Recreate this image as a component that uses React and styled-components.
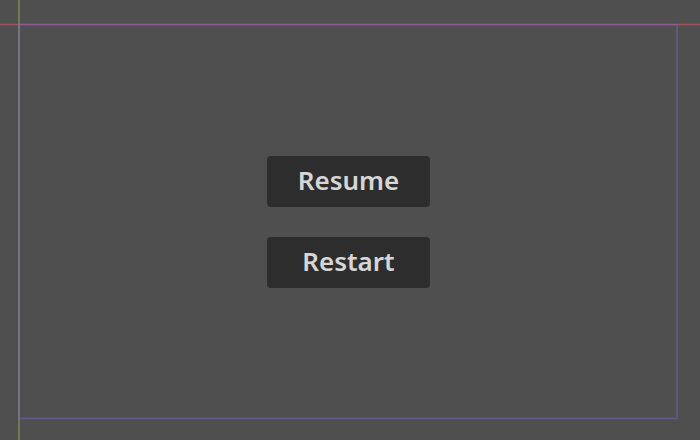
import React from 'react';
import styled, { createGlobalStyle } from 'styled-components';

const GlobalStyle = createGlobalStyle`
  html, body {
    margin: 0;
    padding: 0;
    background: #4f4f4f;
  }
  body {
    font-family: "Noto Sans", "Open Sans", sans-serif;
  }
`;

const Viewport = styled.div`
  position: relative;
  width: 700px;
  height: 440px;
  overflow: hidden;
  background: #4f4f4f;
  box-sizing: border-box;
  padding: 24px 0 0 19px;
`;

const Guides = styled.svg`
  position: absolute;
  left: 0;
  top: 0;
  pointer-events: none;
`;

const Frame = styled.div`
  width: 659px;
  height: 395px;
  display: flex;
  flex-direction: column;
  align-items: center;
  justify-content: center;
  gap: 30px;
`;

const MenuButton = styled.button`
  width: 163px;
  height: 51px;
  border: none;
  border-radius: 4px;
  background: #2d2d2d;
  color: #d6d6d6;
  font-family: "Noto Sans", "Open Sans", sans-serif;
  font-weight: 600;
  font-size: 26px;
  padding: 0 0 2px;
  cursor: pointer;
`;

const PauseMenu = () => (
  <Viewport>
    <Frame>
      <MenuButton>Resume</MenuButton>
      <MenuButton>Restart</MenuButton>
    </Frame>
    <Guides width="700" height="440">
      {/* x axis */}
      <line x1="0" y1="24.5" x2="700" y2="24.5" stroke="#b3525e" strokeOpacity="0.8" strokeWidth="1.5" />
      {/* y axis */}
      <line x1="19" y1="0" x2="19" y2="440" stroke="#93a35a" strokeOpacity="0.7" strokeWidth="1.5" />
      {/* viewport rect */}
      <rect x="19" y="24.5" width="658" height="394" fill="none" stroke="#7a68c8" strokeOpacity="0.5" strokeWidth="1.5" />
    </Guides>
  </Viewport>
);

export default function App() {
  return (
    <>
      <GlobalStyle />
      <PauseMenu />
    </>
  );
}
